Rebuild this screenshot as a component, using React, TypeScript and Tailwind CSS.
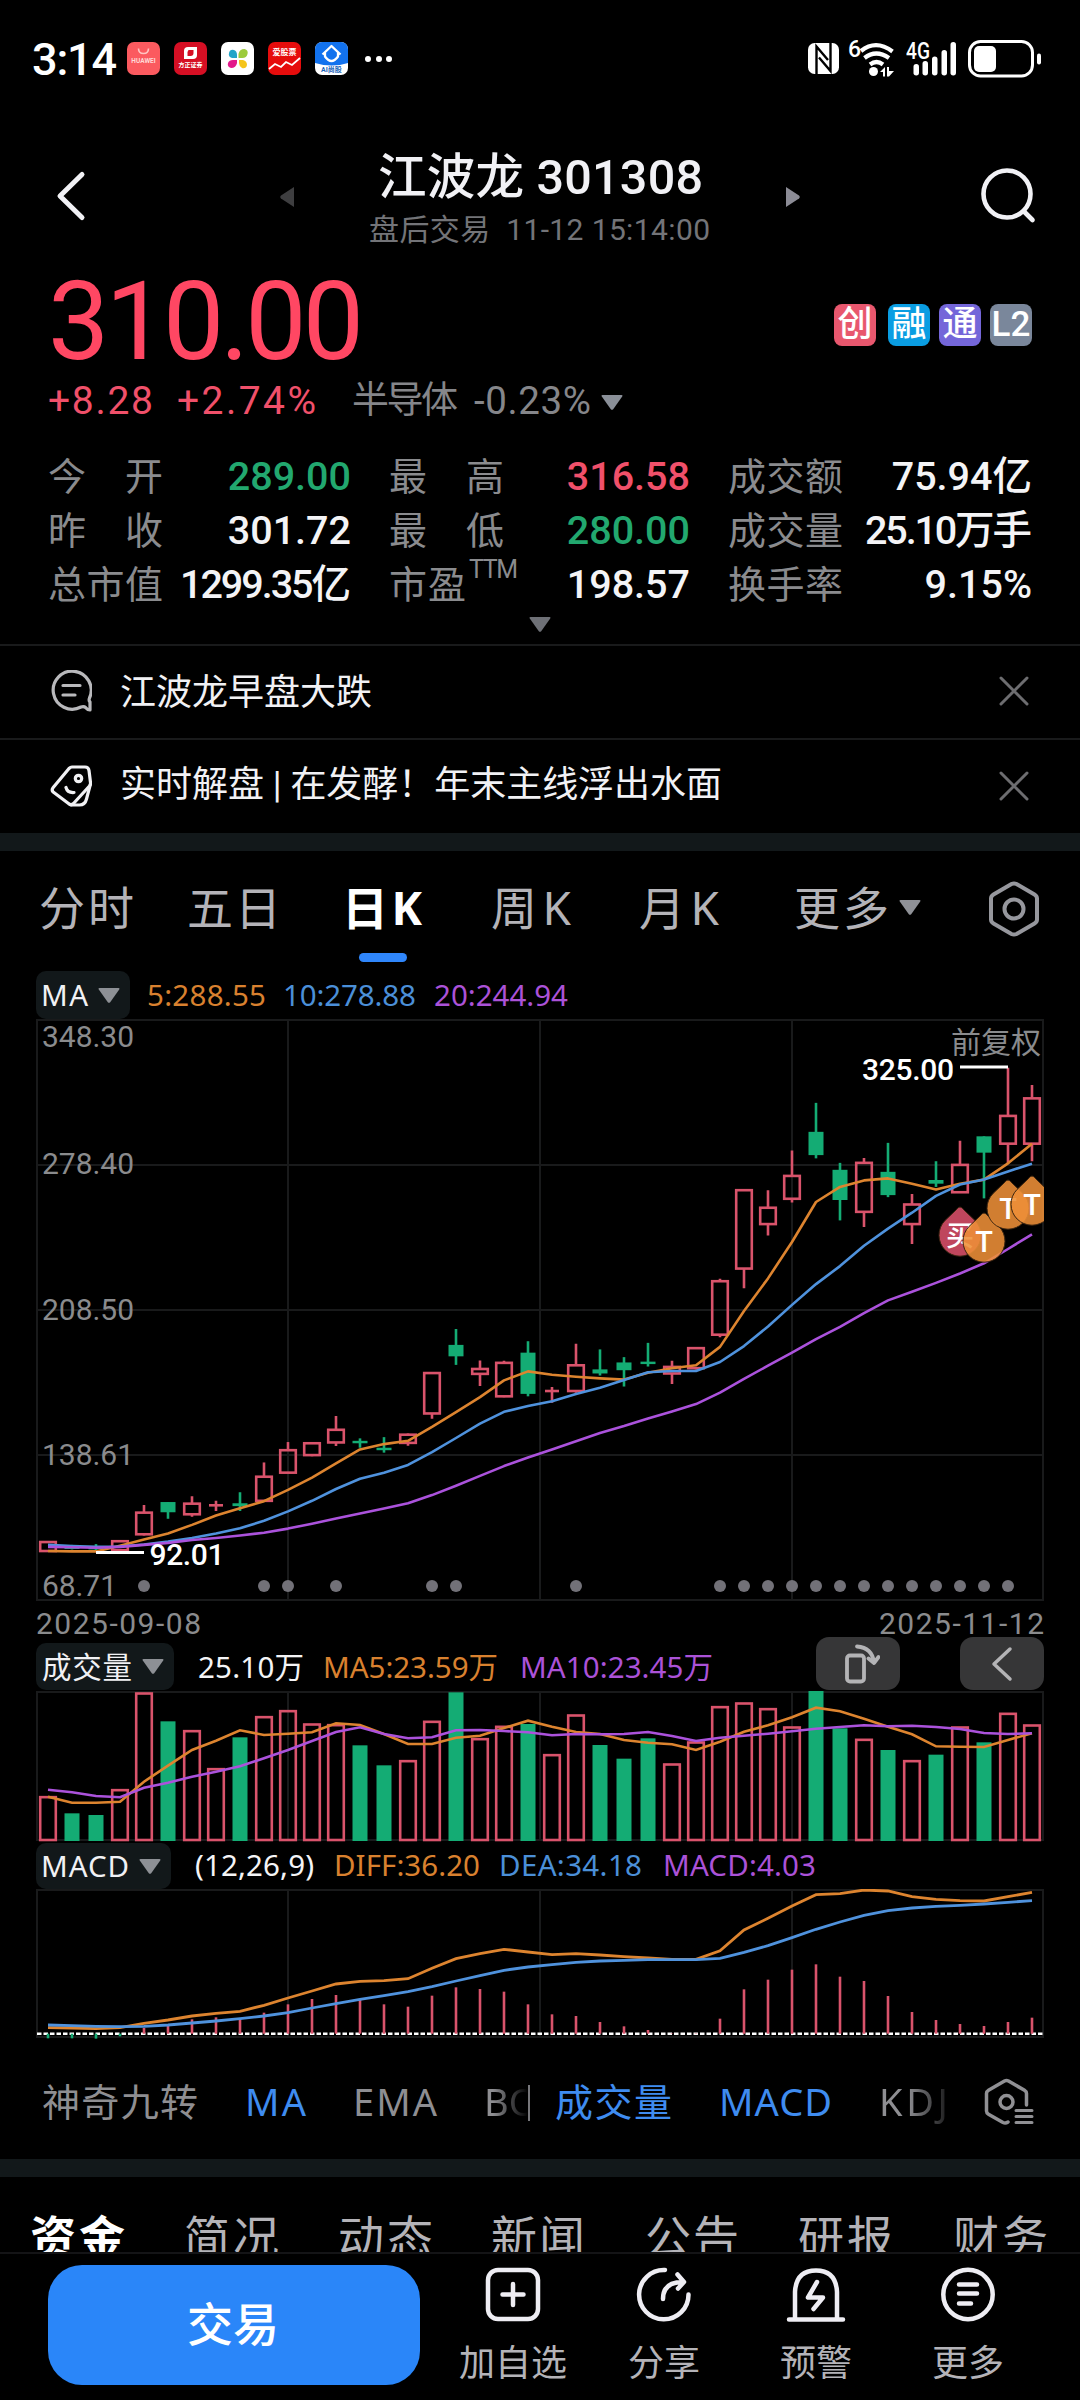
import { useLayoutEffect, useRef, useState } from "react";
import type { ReactNode } from "react";

/** One line of text whose letter spacing is tuned to fill the box given by its width class. */
function Fit({ children, className }: { children: string; className: string }) {
  const box = useRef<HTMLSpanElement>(null);
  const inner = useRef<HTMLSpanElement>(null);
  const [spacing, setSpacing] = useState(0);
  useLayoutEffect(() => {
    if (!box.current || !inner.current || children.length < 2) return;
    const free = box.current.getBoundingClientRect().width - inner.current.getBoundingClientRect().width;
    setSpacing(free / (children.length - 1));
  }, [children]);
  return (
    <span ref={box} className={`block shrink-0 whitespace-pre ${className}`}>
      <span ref={inner} style={{ letterSpacing: spacing }}>
        {children}
      </span>
    </span>
  );
}

const WIDE = "font-['Noto_Sans','Noto_Sans_CJK_SC',sans-serif]";

function Down({ className }: { className: string }) {
  return (
    <svg viewBox="0 0 22 15" className={`h-[15px] w-[22px] shrink-0 ${className}`} fill="currentColor">
      <path d="M1.5 0h19q1.6.3.7 1.6l-9 12.6q-1.2 1.2-2.4 0L.8 1.6Q-.1.3 1.5 0z" />
    </svg>
  );
}

function StatusBar() {
  return (
    <div className="flex h-[117px] shrink-0 items-center text-white">
      <Fit className="ml-[32px] mt-[2px] w-[85px] text-[45px] leading-[60px] font-medium">3:14</Fit>
      <div className="ml-[10px] flex gap-[14px]">
        <div className="flex h-[33px] w-[33px] flex-col items-center rounded-[7px] bg-[#fb5a5f]">
          <svg viewBox="0 0 33 16" className="h-[16px] w-[33px]" fill="none" stroke="#ffc4c0" strokeWidth="1.6">
            <path d="M11.500 6.500q0 5 5 5t5-5" />
          </svg>
          <span className="text-[6.500px] leading-[6px] font-bold text-[#ffd9d6]">HUAWEI</span>
        </div>
        <div className="flex h-[33px] w-[33px] flex-col items-center rounded-[7px] bg-[#d60f24]">
          <svg viewBox="0 0 33 19" className="h-[19px] w-[33px]">
            <path fill="#fff" d="M14 5h9v8q0 4-4 4h-9V9q0-4 4-4z" />
            <path fill="#d60f24" d="M14.500 8h5v3q0 3-3 3h-3v-4z" />
          </svg>
          <span className="text-[6px] leading-[7px] font-bold">方正证券</span>
        </div>
        <svg viewBox="0 0 33 33" className="h-[33px] w-[33px]">
          <rect width="33" height="33" rx="7" fill="#fff" />
          <path fill="#23a5c8" d="M16 16H11q-4-1-3-5 1-4 5-3 3 1 3 5z" />
          <path fill="#9ccb3b" d="M17.500 16v-4q1-5 6-5 4 1 3 5-1 4-5 4z" />
          <path fill="#e2198b" d="M16 18v3q-1 5-6 5-4-1-3-5 1-3 5-3z" />
          <path fill="#f5c51b" d="M18 18h4q4 1 4 5-1 4-5 3-3-2-3-5z" />
        </svg>
        <div className="flex h-[33px] w-[33px] flex-col items-center rounded-[7px] bg-[#e60c0c]">
          <span className="pt-[6px] text-[8px] leading-[9px] font-bold">爱股票</span>
          <svg viewBox="0 0 33 16" className="h-[16px] w-[33px]" fill="none" stroke="#fff" strokeWidth="1.800">
            <path d="M1 12l6-5 6 3 5-5 6 3 8-7" />
          </svg>
        </div>
        <div className="flex h-[33px] w-[33px] flex-col items-center overflow-hidden rounded-[7px] bg-white">
          <svg viewBox="0 0 33 24" className="h-[24px] w-[33px]">
            <path fill="#1272ee" d="M0 0h33v21q-16 5-33 0z" />
            <path fill="none" stroke="#fff" strokeWidth="2.300" strokeLinejoin="round" d="M7.500 12.500l9-8.500 9 8.500M10 10.500v4q6.500 9 13 0v-4" />
          </svg>
          <span className="text-[7px] leading-[8px] font-bold text-[#1662b8]">AI尚股</span>
        </div>
      </div>
      <div className="ml-[17px] flex gap-[4.500px]">
        <i className="h-[6px] w-[6px] rounded-full bg-white" />
        <i className="h-[6px] w-[6px] rounded-full bg-white" />
        <i className="h-[6px] w-[6px] rounded-full bg-white" />
      </div>
      <svg viewBox="0 0 31 31" className="ml-[416px] h-[31px] w-[31px] shrink-0">
        <rect width="31" height="31" rx="6.500" fill="#fff" />
        <path d="M8.500 31V3.500L20 17M22.500 0V28L11 14.500" fill="none" stroke="#000" strokeWidth="2.400" />
      </svg>
      <div className="ml-[9px] flex h-[38px] w-[50px] shrink-0">
        <span className="w-[10px] text-[23px] leading-[20px] font-medium">6</span>
        <svg viewBox="0 0 40 36" className="mt-[2px] h-[36px] w-[40px]" fill="none" stroke="#fff" strokeWidth="4.200">
          <path d="M3 9Q18 -3 34.500 9.500M6.500 16Q18 7 31 16M12 22.500q6.500-5 13 0" />
          <circle cx="15.500" cy="29.500" r="4.500" fill="#fff" stroke="none" />
          <path fill="#fff" stroke="none" d="M22 30l5-5v9.500h-2V30zM29 25h2v4h5l-5 5.500h-2z" />
        </svg>
      </div>
      <svg viewBox="0 0 52 36" className="ml-[8px] h-[36px] w-[52px] shrink-0" fill="#fff">
        <text x="0" y="17.500" fontSize="23" fontWeight="500" textLength="24" lengthAdjust="spacingAndGlyphs" fontFamily="Roboto">4G</text>
        <rect x="7.500" y="23" width="5.500" height="11.500" rx="2.700" />
        <rect x="16.500" y="20" width="5.500" height="14.500" rx="2.700" />
        <rect x="26" y="15.500" width="5.500" height="19" rx="2.700" />
        <rect x="35.500" y="9" width="5.500" height="25.500" rx="2.700" />
        <rect x="44.500" y="1" width="5.500" height="33.500" rx="2.700" />
      </svg>
      <svg viewBox="0 0 74 38" className="ml-[10px] h-[38px] w-[74px] shrink-0">
        <rect x="1.500" y="1.500" width="63" height="34.500" rx="11" fill="none" stroke="#fff" strokeWidth="3" />
        <rect x="6" y="6" width="22" height="26" rx="5" fill="#fff" />
        <rect x="69" y="13.500" width="4" height="11" rx="2" fill="#fff" />
      </svg>
    </div>
  );
}

function Header() {
  return (
    <div className="flex h-[143px] shrink-0 text-[#f1f1f5]">
      <svg viewBox="0 0 32 52" className="ml-[55px] mt-[53px] h-[52px] w-[32px] shrink-0" fill="none" stroke="currentColor" strokeWidth="5" strokeLinecap="round" strokeLinejoin="round">
        <path d="M27 4.500L5 26l22 21.500" />
      </svg>
      <svg viewBox="0 0 14 22" className="ml-[193px] mt-[69px] h-[22px] w-[14px] shrink-0" fill="#3e3e40">
        <path d="M14 1v20L1 12.500q-1.500-1.500 0-3z" />
      </svg>
      <div className="ml-[75px] flex w-[342px] shrink-0 flex-col pt-[31px]">
        <Fit className="ml-[9px] w-[325px] text-[48.500px] leading-[60px] font-medium">江波龙 301308</Fit>
        <Fit className="mt-[3px] w-[341px] text-[30px] leading-[38px] text-[#737478]">盘后交易  11-12 15:14:00</Fit>
      </div>
      <svg viewBox="0 0 14 22" className="ml-[75px] mt-[69px] h-[22px] w-[14px] shrink-0" fill="#8c8c96">
        <path d="M0 1v20l13-8.500q1.500-1.500 0-3z" />
      </svg>
      <svg viewBox="0 0 58 58" className="ml-[180px] mt-[50px] h-[58px] w-[58px] shrink-0" fill="none" stroke="currentColor" strokeWidth="4.600" strokeLinecap="round">
        <circle cx="27" cy="27" r="23.500" />
        <path d="M44.500 45l8 8" />
      </svg>
    </div>
  );
}

const RED = "text-[#f0506a]";
const GREEN = "text-[#22a86f]";

function Stat({ label, value, color }: { label: ReactNode; value: ReactNode; color: string }) {
  return (
    <div className="flex justify-between">
      <span className="text-[#8a8b8e]">{label}</span>
      <span className={`font-medium ${color}`}>{value}</span>
    </div>
  );
}

function Quote() {
  return (
    <div className="flex h-[384px] shrink-0 flex-col">
      <div className="flex h-[122px]">
        <Fit className="ml-[48px] w-[316px] text-[109px] leading-[124px] text-[#ff4763]">310.00</Fit>
        <div className="ml-[470px] mt-[44px] flex text-[35px] leading-[41px] font-medium text-white">
          <span className="h-[42px] w-[42px] rounded-[8px] bg-[#e8576e] text-center">创</span>
          <span className="ml-[12px] h-[42px] w-[42px] rounded-[8px] bg-[#0a9de2] text-center">融</span>
          <span className="ml-[9px] h-[42px] w-[42px] rounded-[8px] bg-[#7466d9] text-center">通</span>
          <span className="ml-[9px] h-[42px] w-[42px] rounded-[8px] bg-[#7a879b] text-center">L2</span>
        </div>
      </div>
      <div className={`flex h-[38px] items-center text-[39px] leading-[38px] ${RED}`}>
        <Fit className="ml-[48px] w-[105px]">+8.28</Fit>
        <Fit className="ml-[24px] w-[139px]">+2.74%</Fit>
        <Fit className="ml-[36px] w-[106px] text-[37px] text-[#85868a]">半导体</Fit>
        <Fit className="ml-[16px] w-[117px] text-[38.500px] text-[#85868a]">-0.23%</Fit>
        <Down className="ml-[10px] mt-[3px] text-[#8a8f98]" />
      </div>
      <div className="ml-[48px] mt-[30px] grid w-[984px] grid-cols-[303px_301px_304px] gap-x-[38px] text-[39.500px] leading-[54px]">
        <Stat label={<Fit className="w-[115px] text-[38px]">今　开</Fit>} value="289.00" color={GREEN} />
        <Stat label={<Fit className="w-[115px] text-[38px]">最　高</Fit>} value="316.58" color={RED} />
        <Stat label={<Fit className="w-[115px] text-[38px]">成交额</Fit>} value="75.94亿" color="text-[#f4f4f6]" />
        <Stat label={<Fit className="w-[115px] text-[38px]">昨　收</Fit>} value="301.72" color="text-[#f4f4f6]" />
        <Stat label={<Fit className="w-[115px] text-[38px]">最　低</Fit>} value="280.00" color={GREEN} />
        <Stat label={<Fit className="w-[115px] text-[38px]">成交量</Fit>} value={<Fit className="w-[167px]">25.10万手</Fit>} color="text-[#f4f4f6]" />
        <Stat label={<Fit className="w-[115px] text-[38px]">总市值</Fit>} value={<Fit className="w-[171px]">1299.35亿</Fit>} color="text-[#f4f4f6]" />
        <Stat
          label={
            <span className="flex">
              <Fit className="w-[77px] text-[38px]">市盈</Fit>
              <Fit className="ml-[3px] w-[49px] text-[25px] leading-[24px]">TTM</Fit>
            </span>
          }
          value="198.57"
          color="text-[#f4f4f6]"
        />
        <Stat label={<Fit className="w-[115px] text-[38px]">换手率</Fit>} value="9.15%" color="text-[#f4f4f6]" />
      </div>
      <Down className="mx-auto mt-[5px] text-[#6e7076]" />
    </div>
  );
}

function Close() {
  return (
    <svg viewBox="0 0 30 30" className="mr-[51px] mb-[2px] ml-auto h-[30px] w-[30px] shrink-0" fill="none" stroke="#6d6d70" strokeWidth="3" strokeLinecap="round">
      <path d="M2 2l26 26M28 2L2 28" />
    </svg>
  );
}

function Notices() {
  return (
    <div className="flex h-[189px] shrink-0 flex-col text-[36px] leading-[50px] text-[#f1f1f4]">
      <div className="flex h-[94px] items-center border-t-2 border-[#191a1b]">
        <svg viewBox="0 0 42 42" className="mb-[2px] ml-[50px] h-[42px] w-[42px] shrink-0" fill="none" stroke="#b9b9bc" strokeWidth="3.200" strokeLinecap="round" strokeLinejoin="round">
          <path d="M40 40V32q-1.500-1.500-.5-4A19 19 0 1 0 31 37q3-1 4.500.5 2 2.500 4.500 2.500z" />
          <path d="M13 15.500h17M13 25h12" />
        </svg>
        <Fit className="mt-[2px] ml-[28px] w-[252px]">江波龙早盘大跌</Fit>
        <Close />
      </div>
      <div className="flex h-[95px] items-center border-t-2 border-[#191a1b]">
        <svg viewBox="0 0 42 42" className="mb-[2px] ml-[50px] h-[42px] w-[42px] shrink-0" fill="none" stroke="#f1f1f4" strokeWidth="3.200" strokeLinecap="round" strokeLinejoin="round">
          <path d="M22 2h13q3.500 0 4 3.500l1.500 12q.3 2-1 3.500L23.500 38.500q-2.500 2.500-5 0L3.200 27q-2-2 0-4.500L19 3.500Q20.500 2 22 2z" />
          <path d="M40.500 19L36.500 34q-1.500 6-7 6h-8M16 22.500q1.500 5.500 8 5" />
          <circle cx="28.500" cy="13.500" r="3.200" />
        </svg>
        <Fit className="ml-[28px] mb-[3px] w-[602px]">实时解盘 | 在发酵！年末主线浮出水面</Fit>
        <Close />
      </div>
    </div>
  );
}

function PeriodTabs() {
  return (
    <div className={`flex h-[120px] shrink-0 text-[46px] leading-[112px] text-[#b4b3b8] ${WIDE}`}>
      <Fit className="ml-[39px] w-[95px]">分时</Fit>
      <Fit className="ml-[53px] w-[94px]">五日</Fit>
      <div className="ml-[61px] w-[84px] shrink-0 text-white">
        <Fit className="h-[102px] w-[80px] font-bold">日K</Fit>
        <div className="ml-[17px] h-[9px] w-[48px] rounded-full bg-[#2f86fb]" />
      </div>
      <Fit className="ml-[65px] w-[80px]">周K</Fit>
      <Fit className="ml-[68px] w-[80px]">月K</Fit>
      <Fit className="ml-[75px] w-[95px]">更多</Fit>
      <Down className="ml-[10px] mt-[49px] text-[#8f9197]" />
      <svg viewBox="0 0 52 56" className="ml-[67px] mt-[30px] h-[56px] w-[52px] shrink-0" fill="none" stroke="#96979d" strokeWidth="4" strokeLinejoin="round">
        <path d="M23.500 3q2.500-1.200 5 0l18 10.500q2.500 1.500 2.500 4v21q0 2.500-2.500 4L28.500 53q-2.500 1.200-5 0l-18-10.500Q3 41 3 38.500v-21q0-2.500 2.500-4z" />
        <circle cx="26" cy="28" r="9.500" />
      </svg>
    </div>
  );
}

type Candle = [up: 0 | 1, high: number, top: number, bottom: number, low: number];

const candles: Candle[] = [
  [1, 1327, 1328, 1350, 1350], [0, 1335, 1336, 1345, 1346], [0, 1333, 1339, 1346, 1348], [1, 1325, 1326, 1348, 1348],
  [1, 1237, 1256, 1309, 1312], [0, 1230, 1230, 1255, 1271], [1, 1216, 1234, 1260, 1266], [1, 1227, 1238, 1239, 1252],
  [0, 1206, 1233, 1240, 1252], [1, 1133, 1168, 1227, 1227], [1, 1083, 1103, 1158, 1158], [1, 1085, 1086, 1115, 1118],
  [1, 1019, 1053, 1084, 1093], [0, 1074, 1080, 1086, 1097], [0, 1071, 1097, 1103, 1109], [1, 1062, 1065, 1085, 1092],
  [1, 912, 914, 1013, 1026], [0, 806, 845, 873, 894], [1, 883, 904, 916, 946], [1, 884, 889, 971, 973],
  [0, 836, 864, 965, 971], [1, 948, 958, 959, 987], [1, 842, 895, 958, 962], [0, 856, 905, 915, 920],
  [0, 875, 888, 907, 947], [0, 840, 886, 892, 898], [1, 884, 899, 915, 941], [1, 851, 853, 902, 905],
  [1, 683, 689, 820, 826], [1, 463, 466, 658, 706], [1, 466, 509, 549, 577], [1, 369, 431, 487, 496],
  [0, 252, 323, 380, 388], [0, 399, 416, 490, 540], [1, 387, 399, 519, 556], [0, 350, 421, 478, 483],
  [1, 475, 501, 549, 598], [0, 395, 441, 450, 458], [1, 345, 404, 471, 472], [0, 334, 334, 374, 486],
  [1, 166, 284, 352, 402], [1, 208, 241, 352, 395],
];
const ma5 = [1350, 1351, 1351, 1337, 1322, 1307, 1286, 1263, 1245, 1228, 1200, 1170, 1135, 1101, 1088, 1080, 1046, 1010, 973, 932, 910, 918, 923, 927, 930, 913, 902, 895, 850, 762, 682, 593, 495, 458, 442, 437, 450, 464, 450, 440, 400, 352];
const ma10 = [1335, 1338, 1340, 1339, 1334, 1327, 1318, 1307, 1294, 1276, 1253, 1227, 1198, 1173, 1158, 1139, 1108, 1073, 1038, 1009, 995, 983, 965, 950, 931, 912, 909, 909, 887, 848, 800, 747, 696, 652, 602, 560, 521, 480, 452, 440, 420, 401];
const ma20 = [1340, 1341, 1342, 1340, 1335, 1330, 1323, 1318, 1312, 1305, 1295, 1283, 1270, 1258, 1246, 1233, 1213, 1190, 1166, 1142, 1121, 1101, 1081, 1061, 1044, 1025, 1008, 990, 962, 928, 896, 864, 831, 801, 767, 736, 715, 693, 670, 645, 610, 574];
const volumes = [590, 640, 645, 569, 279, 364, 392, 506, 412, 350, 332, 372, 374, 436, 496, 482, 364, 277, 416, 379, 372, 464, 345, 435, 476, 415, 492, 426, 320, 309, 326, 381, 273, 385, 418, 450, 482, 464, 381, 427, 340, 375];
const vol5 = [590, 608, 608, 605, 545, 497, 450, 422, 391, 405, 401, 397, 370, 375, 402, 432, 432, 413, 407, 384, 362, 380, 396, 402, 420, 428, 433, 450, 425, 395, 376, 352, 323, 334, 356, 380, 403, 439, 440, 441, 420, 400];
const vol10 = [569, 577, 588, 592, 563, 548, 530, 515, 499, 475, 450, 423, 396, 382, 402, 415, 412, 391, 390, 393, 397, 406, 402, 403, 402, 396, 408, 423, 413, 407, 401, 394, 386, 381, 376, 379, 377, 381, 387, 399, 402, 400];
const macd = [1315, 1315, 1316, 1309, 1284, 1278, 1258, 1252, 1256, 1238, 1213, 1197, 1185, 1199, 1213, 1220, 1187, 1162, 1167, 1175, 1213, 1243, 1248, 1266, 1279, 1290, 1300, 1300, 1256, 1168, 1139, 1109, 1093, 1130, 1143, 1188, 1236, 1260, 1272, 1278, 1266, 1253];
const diff = [1283, 1284, 1286, 1283, 1270, 1260, 1248, 1240, 1234, 1216, 1194, 1173, 1152, 1144, 1142, 1136, 1105, 1076, 1061, 1048, 1056, 1064, 1061, 1065, 1070, 1074, 1078, 1078, 1052, 990, 955, 918, 884, 881, 870, 873, 890, 898, 902, 903, 890, 877];
const dea = [1275, 1277, 1279, 1280, 1279, 1275, 1269, 1263, 1256, 1248, 1238, 1224, 1211, 1198, 1187, 1175, 1160, 1143, 1127, 1111, 1101, 1094, 1087, 1083, 1081, 1079, 1079, 1079, 1075, 1057, 1037, 1013, 988, 966, 946, 932, 924, 919, 916, 912, 907, 902];
const eventDays = [4, 9, 10, 12, 16, 17, 22, 28, 29, 30, 31, 32, 33, 34, 35, 36, 37, 38, 39, 40];

const C_UP = "#d9536b";
const C_DOWN = "#14ac74";
const C_ORANGE = "#dd842f";
const C_BLUE = "#4f92dd";
const C_PURPLE = "#ab52dc";
const GRID = "#191a1b";

const dayX = (i: number) => 48 + 24 * i;
const priceY = (v: number) => v / 2.45;
const subY = (v: number) => v / 3;
const line = (values: number[], y: (v: number) => number) =>
  values.map((v, i) => `${dayX(i)},${y(v).toFixed(1)}`).join(" ");

function Marker({ x, y, label, color }: { x: number; y: number; label: string; color: string }) {
  return (
    <g transform={`translate(${x} ${y})`}>
      <path d="M0-29q2 0 4 3l11 10.500A21 21 0 1 1-15-15.500L-4-26q2-3 4-3z" fill={color} fillOpacity=".88" stroke="#3a2410" strokeWidth="1" />
      <text y={label === "T" ? 10 : 10} textAnchor="middle" fontSize={label === "T" ? 29 : 28} fontWeight="500" fill="#fff">
        {label}
      </text>
    </g>
  );
}

function PriceChart() {
  return (
    <svg viewBox="0 1019 1080 582" className="block h-[582px] w-[1080px] shrink-0" fontFamily="Roboto, 'Noto Sans CJK SC', sans-serif">
      <clipPath id="plot">
        <rect x="36" y="1019" width="1008" height="582" />
      </clipPath>
      <path d="M37 1020H1043V1600H37zM37 1165H1043M37 1310H1043M37 1455H1043M288 1020V1600M540 1020V1600M792 1020V1600" fill="none" stroke={GRID} strokeWidth="2" />
      <g transform="translate(0 1000)" fill="none" strokeWidth="2.600">
        {candles.map(([up, h, t, b, l], i) => {
          const x = dayX(i);
          const top = priceY(t);
          const bottom = priceY(b);
          return up ? (
            <g key={i} stroke={C_UP}>
              <path d={`M${x} ${priceY(h)}V${top}M${x} ${bottom}V${priceY(l)}`} />
              {b - t < 3 ? <path d={`M${x - 7} ${top}H${x + 7}`} /> : <rect x={x - 7.8} y={top} width="15.600" height={bottom - top} />}
            </g>
          ) : (
            <g key={i}>
              <path stroke={C_DOWN} d={`M${x} ${priceY(h)}V${priceY(l)}`} />
              <rect fill={C_DOWN} x={x - 7.5} y={top} width="15" height={bottom - top} />
            </g>
          );
        })}
        <g strokeLinejoin="round">
          <polyline points={line(ma5, priceY)} stroke={C_ORANGE} />
          <polyline points={line(ma10, priceY)} stroke={C_BLUE} />
          <polyline points={line(ma20, priceY)} stroke={C_PURPLE} />
        </g>
      </g>
      <g fill="#727178">
        {eventDays.map((d) => (
          <circle key={d} cx={dayX(d)} cy="1586" r="6" />
        ))}
      </g>
      <g fill="#8a8b8d" fontSize="30">
        <text x="42" y="1047" textLength="92">348.30</text>
        <text x="42" y="1174" textLength="92">278.40</text>
        <text x="42" y="1320" textLength="92">208.50</text>
        <text x="42" y="1465" textLength="92">138.61</text>
        <text x="42" y="1596" textLength="75">68.71</text>
        <text x="951" y="1053" textLength="90">前复权</text>
      </g>
      <path d="M96 1552.500H144M960 1067H1008" stroke="#fff" strokeWidth="3" />
      <g fill="#fff" fontSize="30" fontWeight="500">
        <text x="149.500" y="1565" textLength="75">92.01</text>
        <text x="862" y="1080" textLength="92">325.00</text>
      </g>
      <g clipPath="url(#plot)">
        <Marker x={960} y={1236} label="买" color="#d9506a" />
        <Marker x={984} y={1242} label="T" color="#ee9038" />
        <Marker x={1008} y={1209} label="T" color="#ee9038" />
        <Marker x={1032} y={1205} label="T" color="#ee9038" />
      </g>
    </svg>
  );
}

function VolumeChart() {
  return (
    <svg viewBox="0 1690 1080 153" className="block h-[153px] w-[1080px] shrink-0">
      <path d="M37 1692H1043V1840H37zM288 1692V1840M540 1692V1840M792 1692V1840" fill="none" stroke={GRID} strokeWidth="2" />
      <g transform="translate(0 1600)" fill="none" strokeWidth="2.600">
        {volumes.map((v, i) =>
          candles[i][0] ? (
            <rect key={i} x={dayX(i) - 7.8} y={subY(v) + 0.5} width="15.600" height={240 - subY(v) - 0.5} stroke={C_UP} />
          ) : (
            <rect key={i} x={dayX(i) - 7.5} y={subY(v)} width="15" height={241 - subY(v)} fill={C_DOWN} />
          ),
        )}
        <polyline points={line(vol5, subY)} stroke={C_ORANGE} />
        <polyline points={line(vol10, subY)} stroke={C_PURPLE} />
      </g>
    </svg>
  );
}

function MacdChart() {
  return (
    <svg viewBox="0 1889 1080 151" className="block h-[151px] w-[1080px] shrink-0">
      <path d="M37 1890H1043V2037H37zM288 1890V2037M540 1890V2037M792 1890V2037" fill="none" stroke={GRID} strokeWidth="2" />
      <g transform="translate(0 1600)" fill="none" strokeWidth="2.600">
        <path d="M37 433.700H1043" stroke="#fff" strokeWidth="2.500" strokeDasharray="4.500 2" />
        {macd.map((v, i) => (
          <path key={i} d={`M${dayX(i)} 433.700V${subY(v)}`} stroke={v > 1301 ? C_DOWN : C_UP} />
        ))}
        <polyline points={line(diff, subY)} stroke={C_ORANGE} strokeWidth="2.800" />
        <polyline points={line(dea, subY)} stroke={C_BLUE} strokeWidth="2.800" />
      </g>
    </svg>
  );
}

function MaLegend() {
  return (
    <div className={`flex h-[48px] shrink-0 text-[29.500px] leading-[48px] ${WIDE}`}>
      <div className="ml-[36px] flex h-[48px] w-[94px] shrink-0 items-center rounded-[10px] bg-[#12181a] text-[#f1f1f4]">
        <Fit className="ml-[5px] w-[47px]">MA</Fit>
        <Down className="ml-[10px] text-[#8d9095]" />
      </div>
      <Fit className="ml-[17px] w-[119px] text-[#d9812f]">5:288.55</Fit>
      <Fit className="ml-[17px] w-[133px] text-[#4b8fd8]">10:278.88</Fit>
      <Fit className="ml-[18px] w-[134px] text-[#ab52d8]">20:244.94</Fit>
    </div>
  );
}

function VolumeLegend() {
  return (
    <div className="flex h-[89px] shrink-0 flex-col text-[29.500px]">
      <div className="flex h-[36px] justify-between pt-[3px] pr-[36px] pl-[36px] text-[30px] leading-[40px] text-[#8a8b8d]">
        <Fit className="w-[165px]">2025-09-08</Fit>
        <Fit className="w-[165px]">2025-11-12</Fit>
      </div>
      <div className={`flex h-[53px] leading-[47px] ${WIDE}`}>
        <div className="ml-[36px] mt-[6px] flex h-[47px] w-[138px] shrink-0 items-center rounded-[10px] bg-[#12181a] text-[#f1f1f4]">
          <Fit className="ml-[6px] w-[90px]">成交量</Fit>
          <Down className="ml-[10px] text-[#8d9095]" />
        </div>
        <Fit className="ml-[24px] mt-[6px] w-[106px] text-[#f4f4f6]">25.10万</Fit>
        <Fit className="ml-[19px] mt-[6px] w-[175px] text-[#d9812f]">MA5:23.59万</Fit>
        <Fit className="ml-[22px] mt-[6px] w-[193px] text-[#ab52d8]">MA10:23.45万</Fit>
        <div className="ml-[103px] flex h-[53px] w-[84px] shrink-0 items-center justify-center rounded-[13px] bg-[#363637]">
          <svg viewBox="0 0 36 42" className="ml-[7px] h-[42px] w-[36px]" fill="none" stroke="#b4b4b6" strokeWidth="3.800" strokeLinecap="round" strokeLinejoin="round">
            <rect x="3" y="12.500" width="17" height="26" rx="3" />
            <path d="M13 3.500q15 1 17 16M24.500 15.500l5.500 4.500 4.500-6" />
          </svg>
        </div>
        <div className="ml-[60px] flex h-[53px] w-[84px] shrink-0 items-center justify-center rounded-[13px] bg-[#363637]">
          <svg viewBox="0 0 22 36" className="h-[36px] w-[22px]" fill="none" stroke="#b4b4b6" strokeWidth="3.500" strokeLinecap="round" strokeLinejoin="round">
            <path d="M19 3L3 18l16 15" />
          </svg>
        </div>
      </div>
    </div>
  );
}

function MacdLegend() {
  return (
    <div className={`flex h-[46px] shrink-0 text-[29.500px] leading-[44px] ${WIDE}`}>
      <div className="ml-[36px] flex h-[46px] w-[135px] shrink-0 items-center rounded-[10px] bg-[#12181a] text-[#f1f1f4]">
        <Fit className="ml-[5px] w-[88px]">MACD</Fit>
        <Down className="ml-[10px] text-[#8d9095]" />
      </div>
      <Fit className="ml-[24px] w-[119px] text-[#f4f4f6]">(12,26,9)</Fit>
      <Fit className="ml-[20px] w-[146px] text-[#d9812f]">DIFF:36.20</Fit>
      <Fit className="ml-[19px] w-[143px] text-[#4b8fd8]">DEA:34.18</Fit>
      <Fit className="ml-[21px] w-[153px] text-[#ab52d8]">MACD:4.03</Fit>
    </div>
  );
}

function IndicatorTabs() {
  return (
    <div className={`flex h-[119px] shrink-0 text-[38px] leading-[122px] text-[#8e8e92] ${WIDE}`}>
      <Fit className="ml-[42px] w-[156px]">神奇九转</Fit>
      <Fit className="ml-[47px] w-[61px] text-[#3f8cf0]">MA</Fit>
      <Fit className="ml-[47px] w-[84px]">EMA</Fit>
      <div className="ml-[47px] w-[44px] shrink-0 overflow-hidden mask-r-from-20% mask-r-to-100%">BOLL</div>
      <div className="mt-[45px] h-[36px] w-[2px] shrink-0 bg-[#77777b]" />
      <Fit className="ml-[25px] w-[117px] text-[#3f8cf0]">成交量</Fit>
      <Fit className="ml-[47px] w-[113px] text-[#3f8cf0]">MACD</Fit>
      <div className="ml-[47px] w-[71px] shrink-0 overflow-hidden mask-r-from-40% mask-r-to-110%">
        <Fit className="w-[69px]">KDJ</Fit>
      </div>
      <svg viewBox="0 0 50 48" className="ml-[34px] mt-[38px] h-[48px] w-[50px] shrink-0" fill="none" stroke="#909094" strokeWidth="3.500" strokeLinecap="round" strokeLinejoin="round">
        <path d="M42.500 27V15.500q0-2-2-3.200L24.500 3q-2-1-4 0L4.500 12.300q-2 1.200-2 3.200V33q0 2 2 3.200L19 44.500q2.500 1.200 5-.5" />
        <circle cx="22.500" cy="24" r="6.500" />
        <path d="M32 32.500h16M32 38.500h16M32 44.500h16" strokeWidth="3" />
      </svg>
    </div>
  );
}

function ContentTabs() {
  return (
    <div className="flex h-[75px] shrink-0 overflow-hidden text-[46px] leading-[122px] text-[#b4b3b8]">
      <Fit className="ml-[30px] w-[95px] font-bold text-white">资金</Fit>
      <Fit className="ml-[59px] w-[95px]">简况</Fit>
      <Fit className="ml-[59px] w-[95px]">动态</Fit>
      <Fit className="ml-[58px] w-[94px]">新闻</Fit>
      <Fit className="ml-[60px] w-[94px]">公告</Fit>
      <Fit className="ml-[59px] w-[95px]">研报</Fit>
      <Fit className="ml-[60px] w-[95px]">财务</Fit>
    </div>
  );
}

function Action({ label, children, className }: { label: string; children: ReactNode; className: string }) {
  return (
    <div className={`flex shrink-0 flex-col items-center ${className}`}>
      <svg viewBox="0 0 60 56" className="mt-[12px] h-[56px] w-[60px]" fill="none" stroke="#eeedf3" strokeWidth="4.500" strokeLinecap="round" strokeLinejoin="round">
        {children}
      </svg>
      <span className="mt-[19px] text-[36px] leading-[46px] text-[#b4b3b8]">{label}</span>
    </div>
  );
}

function ActionBar() {
  return (
    <div className="flex h-[148px] shrink-0 border-t-2 border-[#141416]">
      <button className="mt-[11px] ml-[48px] h-[120px] w-[372px] shrink-0 rounded-[34px] bg-[#2a86f9] pr-[2px] text-[46px] font-medium text-white">交易</button>
      <Action label="加自选" className="ml-[38px] w-[110px]">
        <rect x="5" y="4" width="50" height="49" rx="10" />
        <path d="M30 18v21M19.500 28.500h21" />
      </Action>
      <Action label="分享" className="ml-[41px] w-[110px]">
        <path d="M31 4A24.700 24.700 0 1 0 54.500 28.500" />
        <path d="M29 33q0-17 20-17M43.500 8.500l6.500 7.500-6 6.500" />
      </Action>
      <Action label="预警" className="ml-[42px] w-[110px]">
        <path d="M9 53V26Q10 4.500 30 4.500T51 26V53M3 53.500H57M31 16L22 31.500h15L27.500 43" />
      </Action>
      <Action label="更多" className="ml-[42px] w-[110px]">
        <circle cx="30" cy="28.500" r="24.700" />
        <path d="M21 18.500h18M21 27.500h18M21 37.500h12" />
      </Action>
    </div>
  );
}

export default function App() {
  return (
    <div className="flex h-[2400px] w-[1080px] flex-col overflow-hidden bg-black font-[Roboto,'Noto_Sans_CJK_SC',sans-serif]">
      <StatusBar />
      <Header />
      <Quote />
      <Notices />
      <div className="h-[18px] shrink-0 bg-[#12181a]" />
      <PeriodTabs />
      <MaLegend />
      <PriceChart />
      <VolumeLegend />
      <VolumeChart />
      <MacdLegend />
      <MacdChart />
      <IndicatorTabs />
      <div className="h-[18px] shrink-0 bg-[#12181a]" />
      <ContentTabs />
      <ActionBar />
    </div>
  );
}
